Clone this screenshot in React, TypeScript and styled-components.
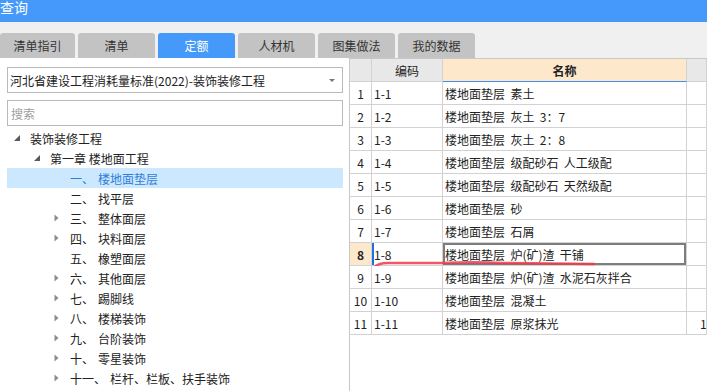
import styled, { createGlobalStyle } from "styled-components";

const GlobalStyle = createGlobalStyle`
  html, body {
    margin: 0;
    padding: 0;
    background: #fff;
  }
  body {
    font-family: "Noto Sans CJK SC", "Microsoft YaHei", sans-serif;
    font-size: 12px;
    color: #222;
  }
`;

const Window = styled.div`
  width: 707px;
  height: 391px;
  overflow: hidden;
  display: flex;
  flex-direction: column;
  background: #fff;
`;

const TitleBar = styled.div`
  height: 22px;
  flex: none;
  background: #4499fa;
  color: #fff;
  font-size: 14px;
  line-height: 15px;
  overflow: hidden;
`;

const TabBar = styled.div`
  height: 36px;
  flex: none;
  box-sizing: border-box;
  padding-top: 11px;
  background: #f0f0f0;
  display: flex;
  gap: 3px;
`;

const Tab = styled.div<{ $active?: boolean }>`
  width: 77px;
  height: 25px;
  border-radius: 3px 3px 0 0;
  display: flex;
  align-items: center;
  justify-content: center;
  background: ${(p) => (p.$active ? "#4499fa" : "#c3c3c3")};
  color: ${(p) => (p.$active ? "#fff" : "#333")};

  &:first-child {
    width: 75px;
  }
`;

const Body = styled.div`
  flex: 1;
  display: flex;
  min-height: 0;
`;

const LeftPanel = styled.div`
  width: 349px;
  flex: none;
  box-sizing: border-box;
  padding: 9px 6px 0 7px;
  display: flex;
  flex-direction: column;
`;

const Combo = styled.div`
  height: 26px;
  box-sizing: border-box;
  border: 1px solid #b9b9b9;
  display: flex;
  align-items: center;
  justify-content: space-between;
  padding: 0 7px 0 2px;
`;

const ComboArrow = styled.span`
  width: 0;
  height: 0;
  border-left: 3px solid transparent;
  border-right: 3px solid transparent;
  border-top: 3px solid #777;
`;

const Search = styled.div`
  margin-top: 7px;
  height: 26px;
  box-sizing: border-box;
  border: 1px solid #b9b9b9;
  display: flex;
  align-items: center;
  padding-left: 3px;
  color: #a0a0a0;
`;

const Tree = styled.div`
  margin-top: 2px;
  display: flex;
  flex-direction: column;
`;

const TreeRow = styled.div<{ $level: number; $selected?: boolean }>`
  height: 20px;
  display: flex;
  align-items: center;
  padding-left: ${(p) => 7 + (p.$level - 1) * 20}px;
  background: ${(p) => (p.$selected ? "#cce8ff" : "transparent")};
  color: ${(p) => (p.$selected ? "#2f7dd9" : "#222")};
  white-space: pre;
`;

const Toggle = styled.span`
  width: 16px;
  flex: none;
  display: flex;
  align-items: center;
`;

const Num = styled.span`
  margin-right: 4px;
`;

const Grid = styled.div`
  flex: 1;
  border-left: 1px solid #c8c8c8;
  border-top: 1px solid #c8c8c8;
  display: flex;
  flex-direction: column;
  min-width: 0;
`;

const GridRow = styled.div`
  position: relative;
  display: grid;
  grid-template-columns: 22px 71px 244px 1fr;
  height: 23px;
`;

const Cell = styled.div<{ $center?: boolean; $head?: boolean }>`
  box-sizing: border-box;
  border-right: 1px solid #d2d2d2;
  border-bottom: 1px solid #d2d2d2;
  display: flex;
  align-items: center;
  justify-content: ${(p) => (p.$center ? "center" : "flex-start")};
  padding: 0 2px;
  white-space: pre;
  overflow: hidden;
  background: ${(p) => (p.$head ? "#e8e8e8" : "#fff")};
`;

const HeadName = styled(Cell)`
  background: #fee8cb;
  border-bottom: 1px solid #3d8ff0;
  font-weight: bold;
`;

const RowNum = styled(Cell)<{ $current?: boolean }>`
  justify-content: center;
  padding: 0;
  background: ${(p) => (p.$current ? "#fee8cb" : "#fff")};
  font-weight: ${(p) => (p.$current ? "bold" : "normal")};
`;

const CodeCell = styled(Cell)<{ $current?: boolean }>`
  box-shadow: ${(p) => (p.$current ? "inset 2px 0 0 #1f6fe5" : "none")};
`;

const NameCell = styled(Cell)<{ $current?: boolean }>`
  box-shadow: ${(p) => (p.$current ? "inset 0 0 0 2px #7d7d7d" : "none")};
`;

const ExtraCell = styled(Cell)`
  padding-left: 13px;
`;

const Scribble = styled.svg`
  position: absolute;
  left: 22px;
  top: 16px;
  pointer-events: none;
`;

const tabs = ["清单指引", "清单", "定额", "人材机", "图集做法", "我的数据"];

const treeItems = [
  { level: 1, open: true, text: "装饰装修工程" },
  { level: 2, open: true, text: "第一章 楼地面工程" },
  { level: 3, num: "一、", text: "楼地面垫层", selected: true },
  { level: 3, num: "二、", text: "找平层" },
  { level: 3, num: "三、", text: "整体面层", closed: true },
  { level: 3, num: "四、", text: "块料面层", closed: true },
  { level: 3, num: "五、", text: "橡塑面层" },
  { level: 3, num: "六、", text: "其他面层", closed: true },
  { level: 3, num: "七、", text: "踢脚线", closed: true },
  { level: 3, num: "八、", text: "楼梯装饰", closed: true },
  { level: 3, num: "九、", text: "台阶装饰", closed: true },
  { level: 3, num: "十、", text: "零星装饰", closed: true },
  { level: 3, num: "十一、", text: "栏杆、栏板、扶手装饰", closed: true },
];

const rows = [
  "楼地面垫层  素土",
  "楼地面垫层  灰土  3：7",
  "楼地面垫层  灰土  2：8",
  "楼地面垫层  级配砂石  人工级配",
  "楼地面垫层  级配砂石  天然级配",
  "楼地面垫层  砂",
  "楼地面垫层  石屑",
  "楼地面垫层  炉(矿)渣  干铺",
  "楼地面垫层  炉(矿)渣  水泥石灰拌合",
  "楼地面垫层  混凝土",
  "楼地面垫层  原浆抹光",
];

function OpenIcon() {
  return (
    <svg width="7" height="7" viewBox="0 0 7 7">
      <polygon points="6,0 6,6 0,6" fill="#5a5a5a" />
    </svg>
  );
}

function ClosedIcon() {
  return (
    <svg width="5" height="8" viewBox="0 0 5 8">
      <polygon points="0.5,0.5 4.5,4 0.5,7.5" fill="#8c8c8c" />
    </svg>
  );
}

export default function App() {
  return (
    <Window>
      <GlobalStyle />
      <TitleBar>查询</TitleBar>
      <TabBar>
        {tabs.map((t) => (
          <Tab key={t} $active={t === "定额"}>
            {t}
          </Tab>
        ))}
      </TabBar>
      <Body>
        <LeftPanel>
          <Combo>
            <span>河北省建设工程消耗量标准(2022)-装饰装修工程</span>
            <ComboArrow />
          </Combo>
          <Search>搜索</Search>
          <Tree>
            {treeItems.map((item, i) => (
              <TreeRow key={i} $level={item.level} $selected={item.selected}>
                <Toggle>
                  {item.open && <OpenIcon />}
                  {item.closed && <ClosedIcon />}
                </Toggle>
                {item.num && <Num>{item.num}</Num>}
                {item.text}
              </TreeRow>
            ))}
          </Tree>
        </LeftPanel>
        <Grid>
          <GridRow>
            <Cell $head />
            <Cell $head $center>
              编码
            </Cell>
            <HeadName $center>名称</HeadName>
            <Cell $head />
          </GridRow>
          {rows.map((name, i) => {
            const current = i === 7;
            return (
              <GridRow key={i}>
                <RowNum $current={current}>{i + 1}</RowNum>
                <CodeCell $current={current}>1-{i + 1}</CodeCell>
                <NameCell $current={current}>{name}</NameCell>
                <ExtraCell>{i === 10 ? "100" : ""}</ExtraCell>
                {current && (
                  <Scribble width="226" height="12" viewBox="0 0 226 12">
                    <path
                      d="M1 9 C4 6, 8 4, 16 4 L70 4 C95 3, 110 3, 130 4 L222 5"
                      fill="none"
                      stroke="#ef3a4a"
                      strokeWidth="2.5"
                      strokeLinecap="round"
                      opacity="0.85"
                    />
                  </Scribble>
                )}
              </GridRow>
            );
          })}
        </Grid>
      </Body>
    </Window>
  );
}
